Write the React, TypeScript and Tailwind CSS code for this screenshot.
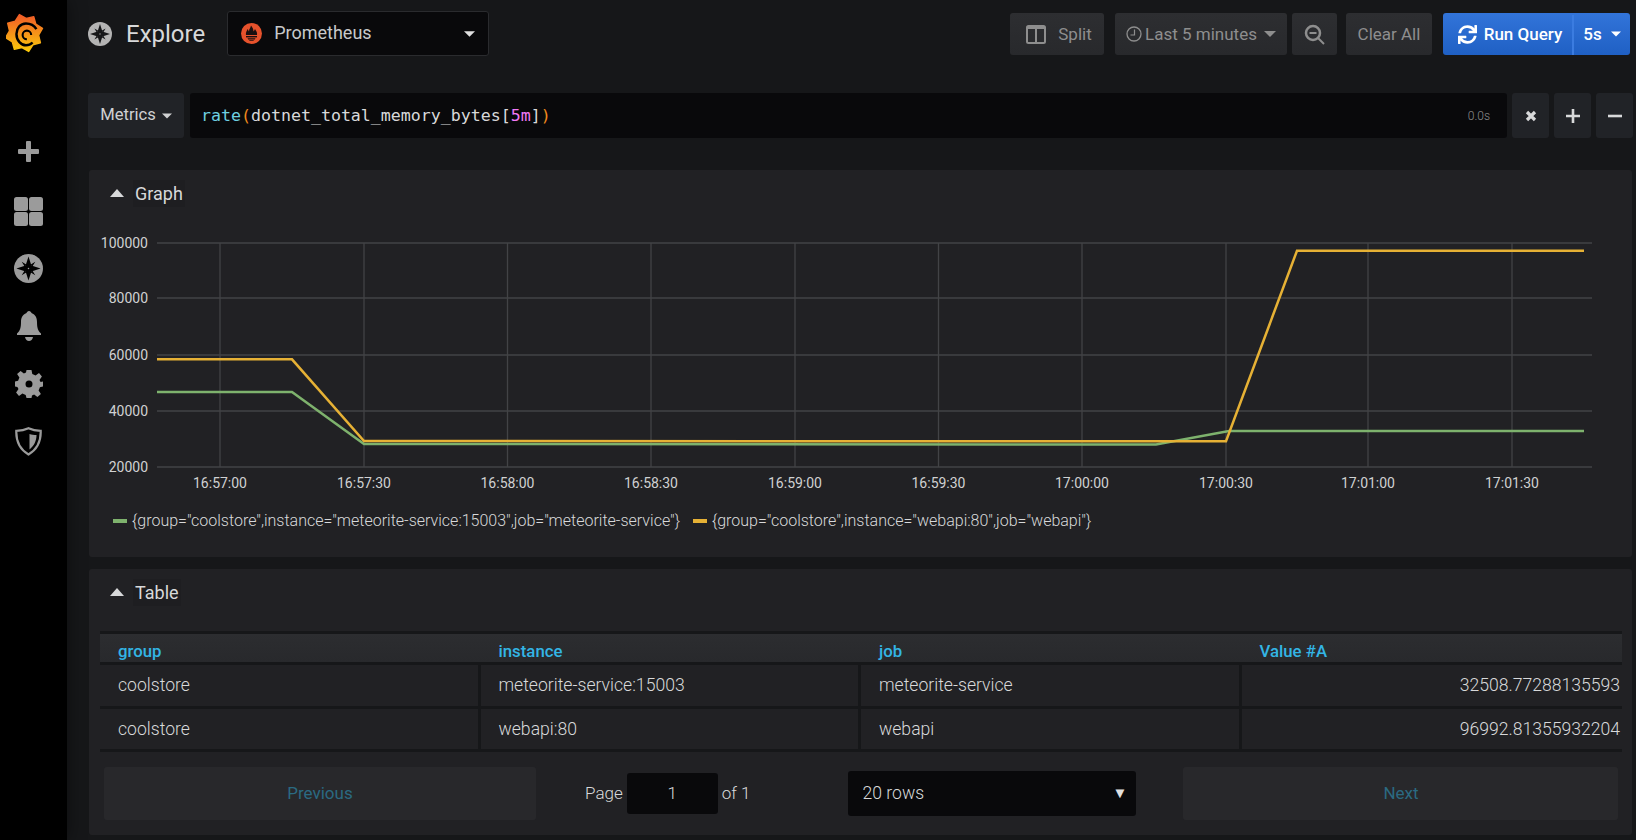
import { FaSync } from "react-icons/fa";

const roboto = "font-['Roboto',sans-serif]";

const yellowLine = "157,359.3 292,359.3 364,441 1226,441.3 1297,250.7 1584,250.7";
const greenLine = "157,392 292,392 364,444 1156,444.5 1229,431 1584,431";
const xTicks = [
  { x: 220, label: "16:57:00" },
  { x: 364, label: "16:57:30" },
  { x: 507.5, label: "16:58:00" },
  { x: 651, label: "16:58:30" },
  { x: 795, label: "16:59:00" },
  { x: 938.5, label: "16:59:30" },
  { x: 1082, label: "17:00:00" },
  { x: 1226, label: "17:00:30" },
  { x: 1368, label: "17:01:00" },
  { x: 1512, label: "17:01:30" },
];
const yTicks = [
  { y: 243, label: "100000" },
  { y: 298, label: "80000" },
  { y: 355, label: "60000" },
  { y: 411, label: "40000" },
  { y: 467, label: "20000" },
];

const rows = [
  { group: "coolstore", instance: "meteorite-service:15003", job: "meteorite-service", value: "32508.77288135593" },
  { group: "coolstore", instance: "webapi:80", job: "webapi", value: "96992.81355932204" },
];

const sunPoints = () => {
  const pts: string[] = [];
  const teeth = 8;
  for (let i = 0; i < teeth * 2; i++) {
    const a = (i / (teeth * 2)) * Math.PI * 2 - Math.PI / 2 - 0.25;
    const r = i % 2 === 0 ? 20 : 15.5;
    pts.push(`${(19 + r * Math.cos(a)).toFixed(1)},${(21 + r * Math.sin(a)).toFixed(1)}`);
  }
  return pts.join(" ");
};

const GrafanaLogo = () => (
  <svg width="38" height="42" viewBox="0 0 40 42" className="ml-[6px] mt-[12px]">
    <defs>
      <linearGradient id="grafanaFill" x1="0" y1="0" x2="0" y2="1">
        <stop offset="0" stopColor="#f05a28" />
        <stop offset="1" stopColor="#fbca0a" />
      </linearGradient>
    </defs>
    <polygon points={sunPoints()} fill="url(#grafanaFill)" stroke="url(#grafanaFill)" strokeWidth="1.500" strokeLinejoin="round" />
    <path d="M32 17 C29 12 25 11 21 11 C15 11 11 16 11 22 C11 29 16 34 21 34 C24 34 26 33 28 31" fill="none" stroke="#000" strokeWidth="2.600" />
    <path d="M26.500 23 A4.500 4.500 0 1 0 22 27.500" fill="none" stroke="#000" strokeWidth="2.200" />
  </svg>
);

const CompassIcon = ({ size, hole }: { size: number; hole: string }) => (
  <svg width={size} height={size} viewBox="0 0 30 30">
    <circle cx="15" cy="15" r="15" fill="currentColor" />
    <path d="M15 2.500 L18 12 L27.500 15 L18 18 L15 27.500 L12 18 L2.500 15 L12 12 Z" fill={hole} />
    <path d="M8 8 L13 11 L11 13 Z M22 8 L19 13 L17 11 Z M22 22 L17 19 L19 17 Z M8 22 L11 17 L13 19 Z" fill={hole} />
    <circle cx="15" cy="15" r="0.800" fill="currentColor" />
  </svg>
);

const Sidebar = () => (
  <div className="w-[67px] shrink-0 bg-black flex flex-col shadow-[0_0_18px_rgba(0,0,0,0.45)] text-[#9b9b9b]">
    <GrafanaLogo />
    <div className="flex flex-col items-center mt-[87px] pr-[10px]">
      <svg width="21" height="21" viewBox="0 0 21 21">
        <path d="M8 1 Q8 0 9 0 H12 Q13 0 13 1 V8 H20 Q21 8 21 9 V12 Q21 13 20 13 H13 V20 Q13 21 12 21 H9 Q8 21 8 20 V13 H1 Q0 13 0 12 V9 Q0 8 1 8 H8 Z" fill="currentColor" />
      </svg>
      <svg width="29" height="29" viewBox="0 0 29 29" className="mt-[35px]">
        <rect x="0" y="0" width="14" height="14" rx="2.5" fill="currentColor" />
        <rect x="15" y="0" width="14" height="14" rx="2.5" fill="currentColor" />
        <rect x="0" y="15" width="14" height="14" rx="2.5" fill="currentColor" />
        <rect x="15" y="15" width="14" height="14" rx="2.5" fill="currentColor" />
      </svg>
      <div className="mt-[28px]">
        <CompassIcon size={29} hole="#000" />
      </div>
      <svg width="24" height="30" viewBox="0 0 24 30" className="mt-[28px]">
        <path d="M12 0 C13.500 0 14 1 14.500 2 C18.500 3.500 20 7 20 11 C20 17 21 20 24 22.500 V24 H0 V22.500 C3 20 4 17 4 11 C4 7 5.500 3.500 9.500 2 C10 1 10.500 0 12 0 Z" fill="currentColor" />
        <path d="M8 26 H16 C15.500 28.500 14 30 12 30 C10 30 8.500 28.500 8 26 Z" fill="currentColor" />
      </svg>
      <svg width="28" height="28" viewBox="0 0 28 28" className="mt-[29px]">
        <path fillRule="evenodd" d="M11.500 0 H16.500 L17.300 4 L20.600 5.400 L24 3.100 L26.900 6.600 L24.500 9.900 L25.600 12 L28 11.500 V16.500 L24.900 17.300 L23.600 20.600 L25.900 24 L22.400 26.900 L19.100 24.500 L17 25.600 L16.500 28 H11.500 L10.700 24.900 L7.400 23.600 L4 25.900 L1.100 22.400 L3.500 19.100 L2.400 17 L0 16.500 V11.500 L3.100 10.700 L4.400 7.400 L2.100 4 L5.600 1.100 L8.900 3.500 L11 2.400 Z M14 10.500 A3.500 3.500 0 1 0 14 17.500 A3.500 3.500 0 1 0 14 10.500 Z" fill="currentColor" />
      </svg>
      <svg width="27" height="29" viewBox="0 0 27 29" className="mt-[29px]">
        <path d="M13.500 1.300 C17 3 21 3.800 25.700 3.800 C26 13 23 22 13.500 27.500 C4 22 1 13 1.300 3.800 C6 3.800 10 3 13.500 1.300 Z" fill="none" stroke="currentColor" strokeWidth="2.200" />
        <path d="M14.500 7 C16.500 7.600 19 8 21.500 8 C21.500 14 19 19 14.500 22.500 Z" fill="currentColor" />
      </svg>
    </div>
  </div>
);

const PrometheusIcon = () => (
  <svg width="21" height="21" viewBox="0 0 21 21">
    <circle cx="10.500" cy="10.500" r="10.500" fill="#e6522c" />
    <path d="M5 12 C4.500 9 6 8 6.500 6 C7.500 7 7.500 8 8 8.500 C8 6 9.500 5 10 2.500 C11.500 4.500 12.500 6 12.500 8.500 C13 8 13.500 7 14 6 C15 8 16.500 9 16 12 Z" fill="#1b1010" />
    <rect x="5" y="13" width="11" height="1.400" fill="#1b1010" />
    <path d="M6.500 15.200 H14.500 L13.800 16.600 H7.200 Z M8 17.200 H13 C12.500 18.400 8.500 18.400 8 17.200 Z" fill="#1b1010" />
  </svg>
);

const Caret = ({ className }: { className: string }) => (
  <svg width="12" height="6" viewBox="0 0 12 6" className={className}>
    <path d="M0 0 H12 L6 6 Z" fill="currentColor" />
  </svg>
);

const TopButton = ({ className, children }: { className: string; children: React.ReactNode }) => (
  <div className={`h-[42px] flex items-center justify-center rounded-[3px] pt-[2px] bg-gradient-to-b from-[#2d2e31] to-[#28292c] text-[#8e8e8e] text-[17px] ${className}`}>
    {children}
  </div>
);

const TopBar = () => (
  <div className="flex items-center h-[45px] mr-[3px]">
    <div className="text-[#b4b4b4]">
      <CompassIcon size={24} hole="#161719" />
    </div>
    <div className="ml-[14px] text-[24px] text-[#d8d9da] leading-none">Explore</div>
    <div className="ml-[22px] w-[262px] h-[45px] flex items-center bg-[#09090b] border border-[#2a2b2e] rounded-[3px] pl-[13px] pr-[13px]">
      <PrometheusIcon />
      <span className="ml-[12px] text-[18px] text-[#c8c9ca] -mt-[3px]">Prometheus</span>
      <Caret className="ml-auto text-[#e0e0e0] w-[11px]" />
    </div>
    <TopButton className="ml-auto w-[94px] pl-[4px]">
      <svg width="20" height="19" viewBox="0 0 20 19">
        <rect x="1" y="1" width="18" height="17" rx="1.500" fill="none" stroke="#8e8e8e" strokeWidth="2" />
        <path d="M10 1 V18" stroke="#8e8e8e" strokeWidth="2" />
        <path d="M1 2.500 H19" stroke="#8e8e8e" strokeWidth="3" />
      </svg>
      <span className="ml-[12px]">Split</span>
    </TopButton>
    <TopButton className="ml-[11px] w-[172px]">
      <svg width="16" height="16" viewBox="0 0 16 16" className="-mt-[2px]">
        <circle cx="8" cy="8" r="7" fill="none" stroke="#8e8e8e" strokeWidth="1.300" />
        <path d="M8.500 3.500 V9 H4.500" fill="none" stroke="#8e8e8e" strokeWidth="1.200" />
      </svg>
      <span className="ml-[3px]">Last 5 minutes</span>
      <Caret className="ml-[7px] -mt-[2px] text-[#8e8e8e]" />
    </TopButton>
    <TopButton className="ml-[5px] w-[45px]">
      <svg width="21" height="21" viewBox="0 0 21 21">
        <circle cx="9" cy="9" r="7" fill="none" stroke="#8e8e8e" strokeWidth="2.500" />
        <path d="M5.500 9 H12.500" stroke="#8e8e8e" strokeWidth="2" />
        <path d="M14 14 L20 20" stroke="#8e8e8e" strokeWidth="2" />
      </svg>
    </TopButton>
    <TopButton className="ml-[9px] w-[86px]">Clear All</TopButton>
    <div className="ml-[11px] w-[187px] h-[42px] flex rounded-[3px] pt-[2px] bg-gradient-to-b from-[#3274d9] to-[#1f60c4] text-white text-[17px] font-medium">
      <div className="w-[131px] pl-[5px] flex items-center justify-center border-r-2 border-[#3b7ce0]">
        <FaSync className="w-[19px] h-[19px]" />
        <span className="ml-[7px]">Run Query</span>
      </div>
      <div className="flex-1 flex items-center justify-center">
        <span>5s</span>
        <Caret className="ml-[9px] -mt-[2px] text-white w-[10px]" />
      </div>
    </div>
  </div>
);

const SquareButton = ({ children, className }: { children: React.ReactNode; className: string }) => (
  <div className={`w-[37px] h-[45px] rounded-[3px] bg-[#212327] flex items-center justify-center text-[#d8d9da] ${className}`}>{children}</div>
);

const QueryRow = () => (
  <div className="flex h-[45px] mt-[37px]">
    <div className="w-[96px] rounded-[3px] bg-[#212327] flex items-center justify-center text-[16.600px] text-[#d0d1d2]">
      Metrics
      <Caret className="ml-[6px] text-[#d0d1d2] w-[10px]" />
    </div>
    <div className="ml-[6px] w-[1317px] rounded-[3px] bg-[#09090b] flex items-center pl-[11px] pr-[17px]">
      <span className="font-['DejaVu_Sans_Mono',monospace] text-[16.6px] text-[#d8d9da] whitespace-pre pt-[2px]">
        <span className="text-[#6ed0e0]">rate</span>
        <span className="text-[#f08a1d]">(</span>
        dotnet_total_memory_bytes[
        <span className="text-[#f07af5]">5m</span>
        ]
        <span className="text-[#f08a1d]">)</span>
      </span>
      <span className="ml-auto text-[12px] text-[#8e8e8e] font-light">0.0s</span>
    </div>
    <SquareButton className="ml-[5px]">
      <svg width="12" height="12" viewBox="0 0 12 12">
        <path d="M2 2 L10 10 M10 2 L2 10" stroke="currentColor" strokeWidth="3.200" />
      </svg>
    </SquareButton>
    <SquareButton className="ml-[5px]">
      <svg width="14" height="14" viewBox="0 0 14 14">
        <path d="M7 0 V14 M0 7 H14" stroke="currentColor" strokeWidth="2.600" />
      </svg>
    </SquareButton>
    <SquareButton className="ml-[5px]">
      <svg width="14" height="4" viewBox="0 0 14 4">
        <path d="M0 2 H14" stroke="currentColor" strokeWidth="2.600" />
      </svg>
    </SquareButton>
  </div>
);

const PanelTitle = ({ title }: { title: string }) => (
  <div className="flex items-center h-[46px] pl-[21px]">
    <svg width="14" height="8" viewBox="0 0 14 8">
      <path d="M7 0 L14 8 H0 Z" fill="#d8d9da" />
    </svg>
    <span className="ml-[9px] px-[2px] h-[27px] flex items-center bg-[#1e1e21] text-[18px] text-[#d8d9da]">{title}</span>
  </div>
);

const Chart = () => (
  <svg width="1543" height="275" viewBox="89 225 1543 275" className="block mt-[9px]">
    {yTicks.map((t) => (
      <g key={t.y}>
        <line x1="157" x2="1592" y1={t.y} y2={t.y} stroke="#424346" strokeWidth="1.300" />
        <text x="148" y={t.y + 4.5} textAnchor="end" fontFamily="Roboto" fontSize="14" fill="#d0d1d2">
          {t.label}
        </text>
      </g>
    ))}
    {xTicks.map((t) => (
      <g key={t.x}>
        <line x1={t.x} x2={t.x} y1="243" y2="467" stroke="#424346" strokeWidth="1.300" />
        <text x={t.x} y="488" textAnchor="middle" fontFamily="Roboto" fontSize="14" fill="#d0d1d2">
          {t.label}
        </text>
      </g>
    ))}
    <polyline points={greenLine} fill="none" stroke="#7eb26d" strokeWidth="2.500" />
    <polyline points={yellowLine} fill="none" stroke="#e6b135" strokeWidth="2.500" />
  </svg>
);

const LegendItem = ({ color, label, className }: { color: string; label: string; className: string }) => (
  <div className={`flex items-center ${className}`}>
    <span className={`w-[14px] h-[4px] ${color}`} />
    <span className="ml-[5px] text-[16px] text-[#d8d9da] font-light whitespace-nowrap">{label}</span>
  </div>
);

const GraphPanel = () => (
  <div className="ml-px mr-px mt-[32px] h-[387px] bg-[#212124] rounded-[3px]">
    <PanelTitle title="Graph" />
    <Chart />
    <div className="flex h-[20px] mt-[11px] pl-[24px]">
      <LegendItem color="bg-[#7eb26d]" label={'{group="coolstore",instance="meteorite-service:15003",job="meteorite-service"}'} className="" />
      <LegendItem color="bg-[#e6b135]" label={'{group="coolstore",instance="webapi:80",job="webapi"}'} className="ml-[13px]" />
    </div>
  </div>
);

const TableCell = ({ children, last }: { children: React.ReactNode; last?: boolean }) => (
  <div className={`h-[43.500px] flex items-center text-[17.600px] text-[#d8d9da] font-light border-b-[3px] border-[#161719] ${last ? "justify-end pr-[2px]" : "pl-[18px] border-r-[3px]"}`}>
    {children}
  </div>
);

const TablePanel = () => (
  <div className="ml-px mr-px mt-[12px] h-[266px] bg-[#212124] rounded-[3px]">
    <PanelTitle title="Table" />
    <div className="ml-[11px] mr-[10px] mt-[16px] border-y-[3px] border-[#161719] grid grid-cols-4 h-[34px] bg-gradient-to-b from-[#2c2d30] to-[#28292c] text-[16.800px] leading-[22px] font-medium text-[#33b5e5] items-end">
      <div className="pl-[18px]">group</div>
      <div className="pl-[18px]">instance</div>
      <div className="pl-[18px]">job</div>
      <div className="pl-[18px]">Value #A</div>
    </div>
    <div className="ml-[11px] mr-[10px] grid grid-cols-4">
      {rows.map((r) => (
        <div key={r.instance} className="contents">
          <TableCell>{r.group}</TableCell>
          <TableCell>{r.instance}</TableCell>
          <TableCell>{r.job}</TableCell>
          <TableCell last>{r.value}</TableCell>
        </div>
      ))}
    </div>
    <div className="flex items-center mt-[15px] ml-[15px] text-[17px] text-[#d8d9da] font-light">
      <div className="w-[432px] h-[53px] rounded-[3px] bg-[#28282b] flex items-center justify-center text-[#2b6a82] font-normal">Previous</div>
      <span className="ml-[49px]">Page</span>
      <div className="ml-[4px] w-[91px] h-[41px] rounded-[3px] bg-[#09090b] flex items-center justify-center">1</div>
      <span className="ml-[4px]">of 1</span>
      <div className="ml-[98px] w-[288px] h-[45px] rounded-[3px] bg-[#09090b] flex items-center pl-[14px] pr-[9px] text-[17.600px]">
        20 rows
        <span className="ml-auto text-[15px] text-[#e0e0e0]">▼</span>
      </div>
      <div className="ml-[47px] w-[435px] h-[53px] rounded-[3px] bg-[#28282b] flex items-center justify-center text-[#2b6a82] font-normal">Next</div>
    </div>
  </div>
);

const App = () => {
  return (
    <div className={`flex h-[840px] w-[1636px] overflow-hidden bg-[#161719] ${roboto}`}>
      <Sidebar />
      <div className="flex-1 pl-[21px] pr-[3px] pt-[11px] min-w-0">
        <TopBar />
        <QueryRow />
        <GraphPanel />
        <TablePanel />
      </div>
    </div>
  );
};

export default App;
